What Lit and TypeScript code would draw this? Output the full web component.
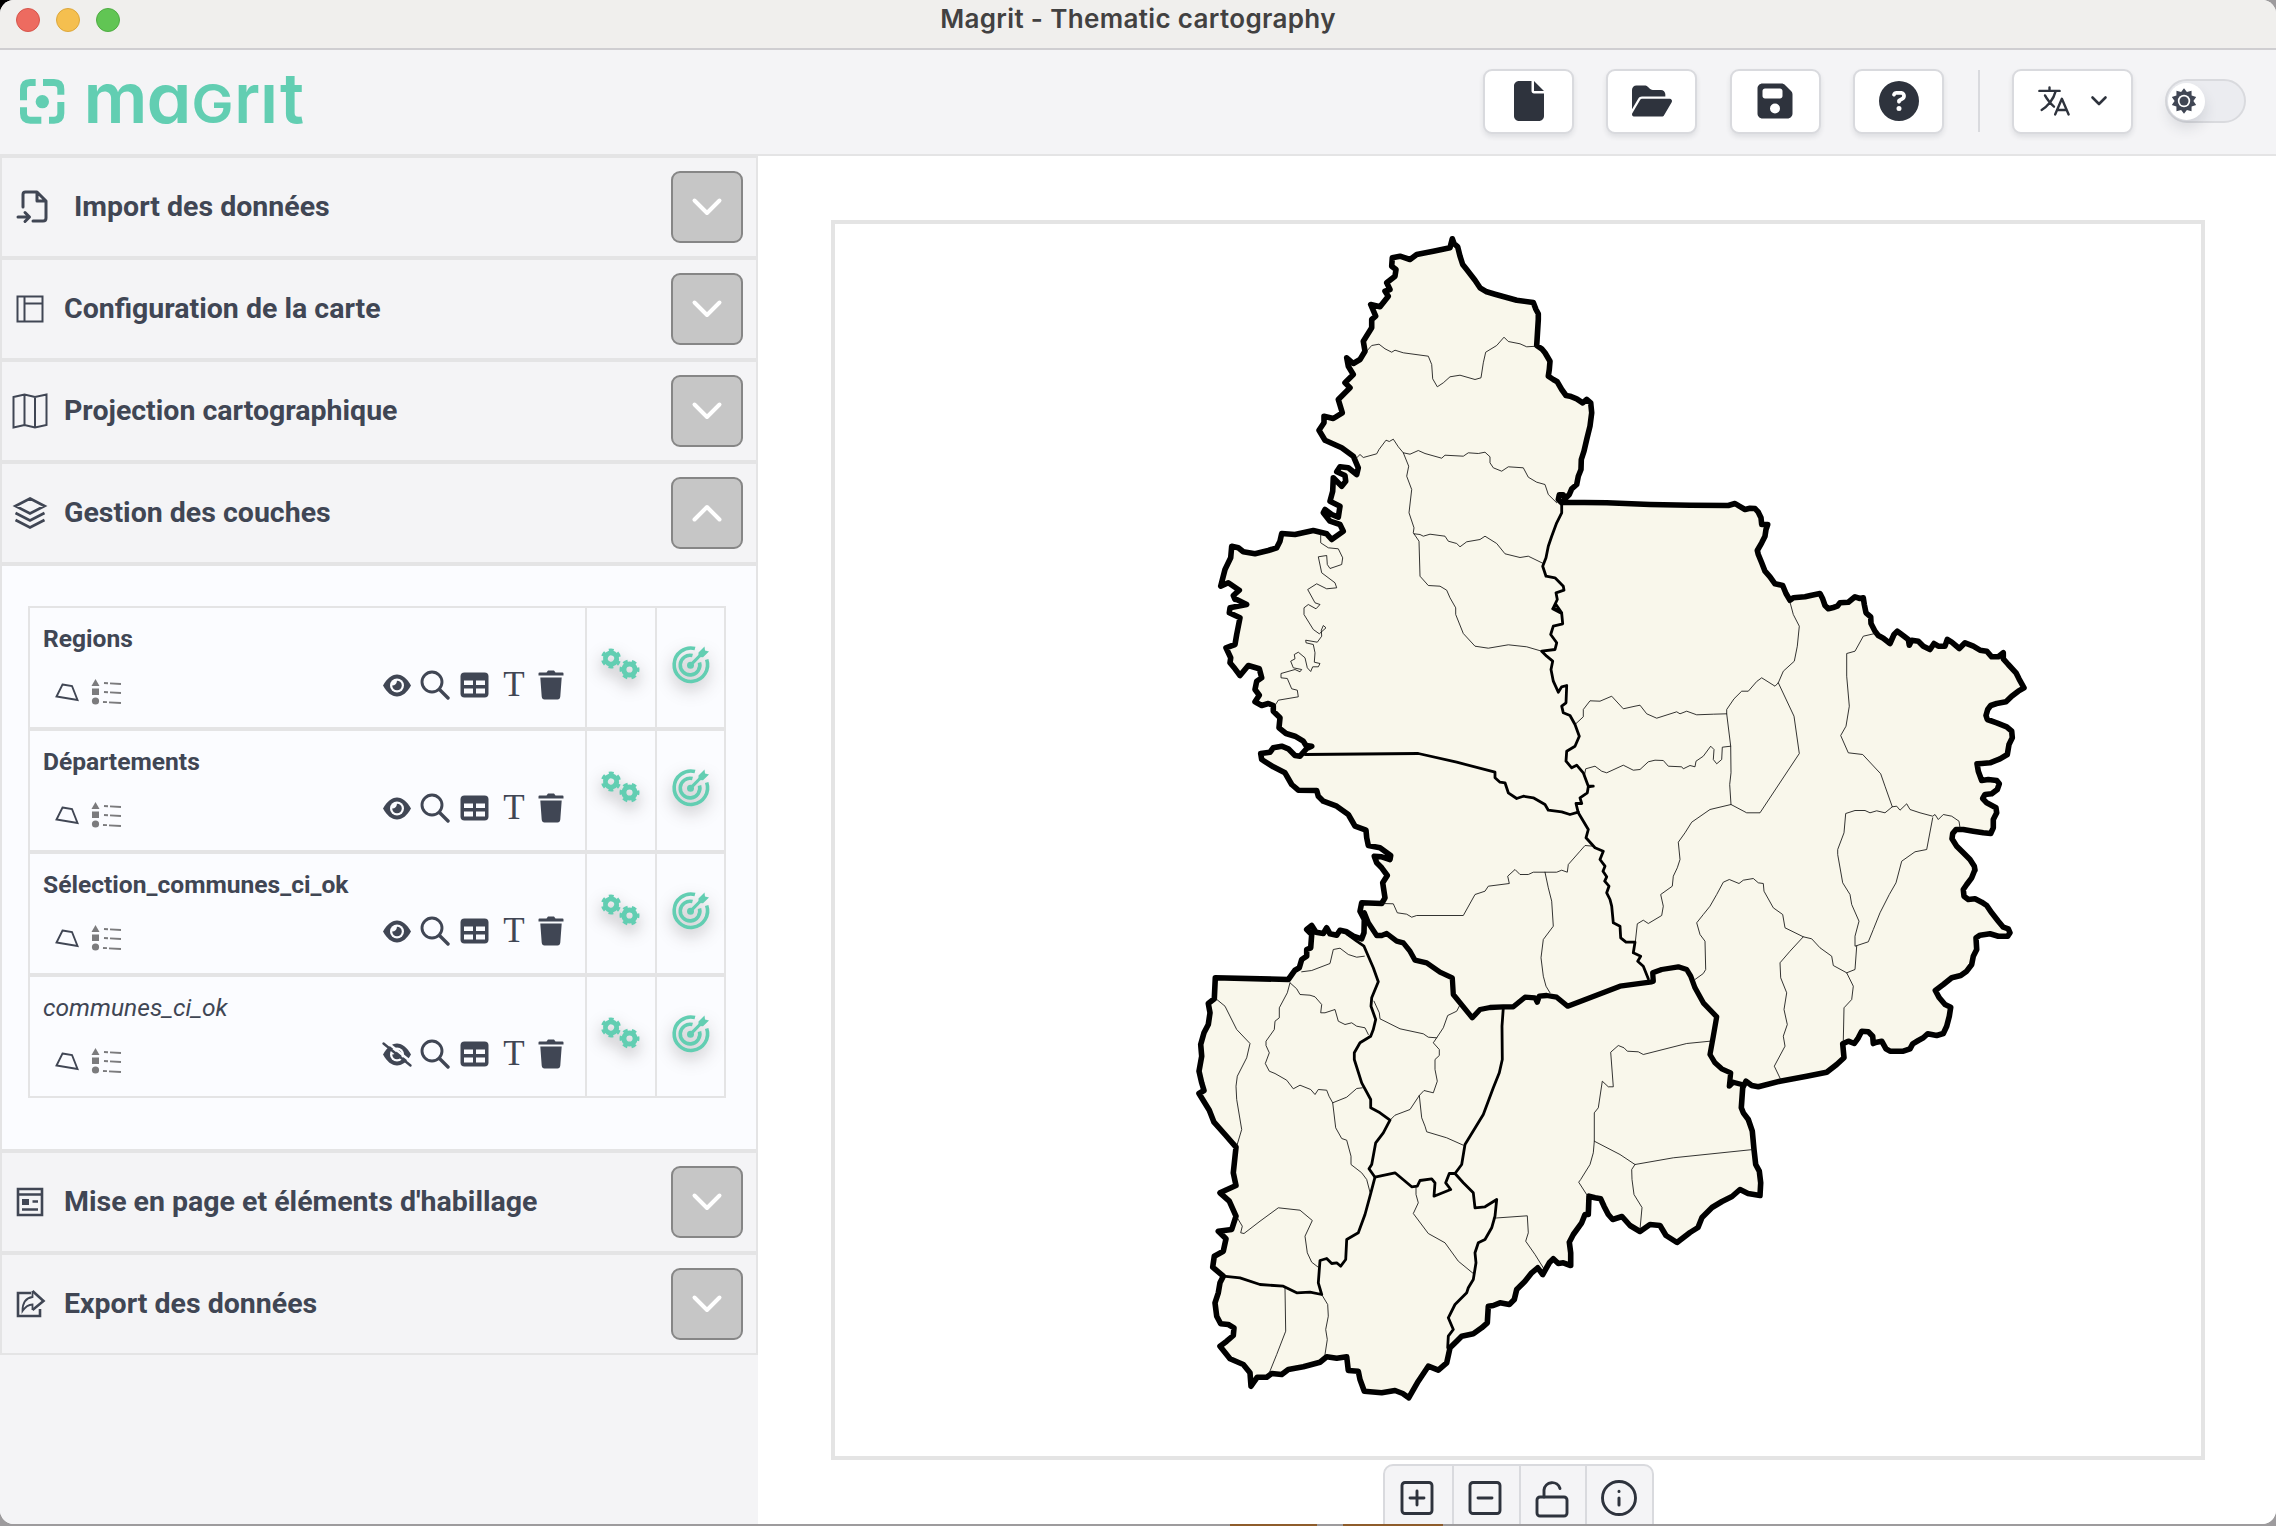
import { LitElement, html, css, svg, TemplateResult, SVGTemplateResult } from "lit";
import { customElement, property } from "lit/decorators.js";

/* ---------- map geometry ---------- */

type Sheet = [number, number];
const A: Sheet = [1180, 220];
const B: Sheet = [1180, 600];
const C: Sheet = [1540, 480];
const D: Sheet = [1540, 780];
const E: Sheet = [1180, 900];

/** Points are stored in thirds of a map unit, relative to the origin of their sheet. */
const pts = (sheet: Sheet, list: string): string =>
  list
    .trim()
    .split(/\s+/)
    .map((p) => {
      const [x, y] = p.split(",").map(Number);
      return `${(sheet[0] + x / 3).toFixed(1)},${(sheet[1] + y / 3).toFixed(1)}`;
    })
    .join(" ");

const OUTLINE = [
  pts(A, `817,58 822,72 833,82 840,110 848,135 860,150 885,182 900,205 920,217 945,224 1010,242 1060,249 1068,270 1075,283 1075,300 1070,378 1085,388 1095,400 1110,425 1108,450 1105,470 1120,480 1132,487 1145,510 1158,528 1170,530 1190,538 1208,550 1220,540 1232,550 1235,580 1230,620 1220,660 1212,695 1204,720 1203,750 1195,770 1190,795 1175,808 1168,825 1155,838 1150,826 1138,826 1135,840 1145,850`),
  pts(C, `65,68 200,70 330,75 450,77 565,78 585,72 598,80 615,90 630,86 645,87 655,98 663,115 665,135 683,135 678,150 675,170 665,190 652,213 655,225 665,250 675,275 690,292 705,313 728,318 738,342 750,362 760,355 795,352 815,347 840,342 848,358 855,378 865,388 880,384 892,380 900,370 925,368 945,352 960,357 970,355 973,375 978,400 992,412 993,432 1005,455 1015,468 1030,476 1050,492 1062,465 1072,455 1085,465 1105,480 1108,497 1115,482 1135,485 1150,500 1170,510 1182,492 1195,500 1215,500 1222,480 1235,488 1258,507 1275,490 1300,500 1320,512 1340,515 1355,532 1375,532 1390,520 1390,538 1405,555 1428,580 1437,598 1452,625 1435,635 1415,650 1398,667 1370,672 1352,678 1343,690 1338,708 1342,720 1370,730 1400,742 1415,755 1417,775 1407,795 1402,825 1380,838 1350,850 1325,852 1311,853 1315,875 1325,903 1345,900 1370,903 1378,913 1372,930 1355,943 1335,945 1328,957 1340,970 1368,985 1370,1000 1360,1020 1360,1045 1352,1062 1330,1060 1300,1055 1270,1050 1248,1050 1238,1062 1236,1078 1250,1100 1270,1120 1290,1140 1303,1160 1305,1172`),
  pts(D, `1303,275 1295,295 1280,315 1270,330 1272,350 1285,360 1305,358 1325,368 1340,378 1355,400 1375,425 1390,443 1405,448 1410,460 1403,470 1375,470 1350,463 1320,467 1308,475 1310,510 1300,530 1295,555 1280,575 1262,588 1235,595 1210,615 1186,633 1198,655 1215,675 1232,683 1228,710 1220,740 1210,762 1190,768 1163,763 1150,775 1135,783 1118,793 1110,808 1090,815 1050,815 1038,808 1025,785 1010,788 1000,792 998,770 985,757 965,755 955,775 943,792 925,785 908,793 912,835 890,855 860,878 800,890 720,905 655,922 635,918 618,905 608,925 606,955 604,985 610,1000 625,1020 637,1055 642,1110 647,1155 658,1175 662,1210`),
  `1760,1196 1748,1194 1740,1190 1732,1197 1722,1202 1712,1208 1702,1218 1698,1228 1690,1233 1677,1243 1666,1236 1660,1226 1650,1225 1640,1232 1630,1226 1622,1217`,
  pts(E, `1298,960 1285,945 1272,920 1262,898 1245,895 1227,890 1225,945 1215,945 1205,970 1180,1005 1168,1028 1172,1060 1172,1098 1150,1090 1135,1092 1120,1078 1108,1090 1088,1125 1073,1105 1055,1120 1035,1145 1010,1170 1003,1200 988,1215 960,1210 940,1218 925,1220 922,1270 905,1285 880,1303 845,1310 830,1325 810,1345 800,1390 775,1412 745,1400 715,1445 686,1495 668,1482 645,1473 605,1480 553,1475 540,1440 535,1415 505,1413 500,1372 470,1376 440,1372 420,1388 370,1402 325,1410 305,1425 275,1422 260,1433 232,1433 213,1460 210,1420 190,1395 150,1378 120,1340 140,1325 160,1308 162,1285 145,1275 122,1273 110,1250 105,1210 115,1180 120,1150 130,1130 98,1103 103,1070 130,1055 138,1018 115,995 155,990 168,950 148,905 120,880 168,858 160,820 168,743 135,705 102,668 88,632 57,582 72,573 65,550 57,515 65,470 62,435 72,400 85,375 90,340 85,312 103,298 106,235 325,240 345,212 358,205 365,180 380,170 380,150 392,145 395,105 380,90 395,78 408,98 430,102 440,85 450,103 470,107 480,92 500,97 520,110 545,118 552,100 553,60 540,35 545,10`),
  pts(B, `605,912 615,895 608,850 622,828 605,805 590,790 583,770 605,772 630,780 632,768 600,745 565,738 560,715 558,692 525,680 505,645 470,620 430,605 415,590 410,573 355,572 335,555 315,520 280,502 245,480 242,462 270,458 280,445 305,440 325,448 345,468 360,470 380,447 395,440 378,438 370,425 345,410 318,402 297,385 300,355 280,335 280,318 265,312 245,318 225,307 238,287 225,270 230,245 245,235 238,208 205,198 180,228 165,208 150,190 152,175 138,145 165,135 170,105 180,55 148,40 150,25 200,15 170,0`),
  pts(A, `165,1140 160,1128 178,1112 145,1090 122,1100 135,1050 152,1015 155,980 175,985 190,997 225,1003 265,993 290,985 300,965 305,942 345,945 400,933 440,943 455,960 490,935 480,915 450,905 430,880 435,870 455,885 475,893 480,860 450,845 458,815 460,775 485,800 497,785 495,768 470,757 480,742 505,745 530,765 535,745 520,710 485,685 435,662 417,632 432,610 432,590 460,597 487,580 475,540 510,505 495,490 520,465 505,440 500,415 520,432 540,420 555,395 550,365 575,325 575,300 587,290 572,255 600,262 625,230 615,215 630,210 620,190 645,170 648,150 635,140 637,115 660,110 690,120 710,105 760,95 810,85`),
].join(" ");

const REGION_BORDER =
  pts(E, `553,40 565,70 590,108 605,108 620,102 650,125 670,130 690,155 705,182 740,190 780,218 817,235 820,285 877,355 900,330 930,324 970,322 1000,322 1035,293 1065,295 1072,308 1078,290 1100,288 1130,293 1163,320`) +
  " " +
  pts(D, `240,620 335,607 340,605 338,580 365,570 415,562 440,570 452,590 465,625 490,670 530,712 520,770 510,825 525,850 545,868 572,880 568,920 580,908 605,915`);

const DEPARTMENTS = [
  pts(A, `1145,850 1145,880 1130,910 1115,950 1105,980 1098,1015 1088,1040 1098,1070 1125,1075 1150,1100 1152,1112 1128,1120 1132,1140 1120,1165 1145,1180`) +
    " " +
    pts(B, `1128,15 1118,28 1145,42 1148,73 1120,80 1112,105 1130,130 1125,150 1085,155 1100,170 1118,185 1113,210 1120,245 1135,278 1145,262 1160,258 1158,310 1145,320 1150,340 1170,348 1185,375 1198,410 1185,440 1160,455 1158,485 1175,505 1190,497 1210,520 1225,560 1240,560 1225,562 1222,580 1200,595 1205,612 1188,612 1195,640 1225,690 1218,715 1245,745 1270,755 1260,780 1275,800 1269,815 1280,832 1274,845 1287,860 1280,880 1290,900 1295,920 1300,970`) +
    " " +
    pts(D, `240,440 242,475 258,488 285,488 280,520 302,530 293,545 310,560 325,598`),
  pts(B, `375,465 715,462 830,488 945,518 945,535 960,548 975,550 985,580 1010,597 1030,590 1060,595 1095,615 1105,632 1145,637 1170,645 1195,638`),
  pts(E, `500,103 530,125 552,140 580,205 595,247 575,295 573,320 587,360 580,390 572,410 540,430 523,460 523,480 545,550 572,600 572,625 600,640 630,662 610,700 587,730 575,795 567,808 585,833 570,890 555,945 535,1000 500,1020 497,1080 482,1100 470,1090 455,1092 440,1077 420,1083 415,1150 425,1185 390,1178 350,1180 310,1160 240,1155 180,1135 130,1130`),
  pts(E, `585,833 645,820 695,862 712,860 720,843 755,838 765,850 762,890 812,870 797,850 808,822 825,822 845,795 855,735 910,645 940,565 958,520 967,480 966,380 970,325`),
  pts(E, `825,822 850,850 880,880 885,925 915,922 950,900 945,950 935,985 915,1020 895,1030 885,1060 888,1090 880,1140 865,1165 860,1180 825,1215 805,1255 820,1290 805,1310 803,1345`),
];

const COMMUNES = [
  pts(A, `560,395 575,378 597,374 615,388 635,398 645,392 670,400 745,410 755,435 758,478 772,502 790,490 810,472 840,467 885,480 903,475 910,430 917,398 950,378 972,353 985,366 1020,373 1040,382 1070,380`),
  pts(A, `525,720 540,705 550,714 590,703 597,690 618,662 628,666 640,659 655,682 670,700 686,740 680,770 695,810 687,880 702,925 700,940 717,965 720,1070 745,1098 780,1100 800,1112 810,1135 827,1165`) +
    " " +
    pts(B, `827,45 850,102 885,140 925,146 985,136 1040,142 1085,155`),
  pts(A, `670,700 690,704 715,693 735,702 785,716 795,707 850,710 865,700 895,702 915,698 930,712 930,730 940,745 965,755 985,742 1030,745 1045,773 1070,788 1095,795 1105,825 1130,850`),
  pts(A, `702,943 720,945 730,950 750,944 795,950 805,965 830,972 840,982 860,967 900,960 915,950 950,972 975,1003 1020,1014 1045,1010 1090,1032`),
  pts(A, `422,945 422,970 445,985 475,988 488,1015 485,1035 450,1047 442,1035 440,1008 415,1012 425,1060 465,1090 470,1105 440,1108 410,1093 383,1110 405,1150 420,1155 408,1168 385,1155 372,1165`) +
    " " +
    pts(B, `372,45 400,90 418,103 438,85 430,78 424,92 425,110 412,128 377,122 378,130 400,135 405,160 403,188 420,192 415,202 398,202 392,216 382,205 375,175 355,158 343,165 345,178 332,185 340,205 365,210 360,217 345,210 303,222 303,235 322,237 335,268 352,272 355,292 295,302 285,318`),
  pts(B, `605,912 640,913 652,940 680,944 695,953 710,948 850,948 885,885 915,875 925,860 988,852 983,830 1005,810 1020,825 1045,825 1060,818 1095,818 1130,818 1145,812 1162,818 1165,795 1200,755 1215,738 1240,740`),
  pts(B, `1095,818 1105,865 1115,905 1120,980 1090,1020 1083,1075 1090,1130 1098,1160 1110,1180`),
  pts(E, `365,217 395,213 450,192 460,150 480,146 505,165 530,173 553,170`),
  pts(E, `330,250 350,268 360,285 390,287 405,292 425,315 422,340 435,340 465,330 475,365 495,375 515,370 530,380 555,385 565,405`),
  pts(E, `330,250 322,280 298,325 298,355 285,365 283,390 258,425 258,438 268,460 256,492 268,515 285,522 320,542 340,568 360,557 392,570 405,585 415,570 440,572 447,590 458,610 467,685 485,717 500,722 513,770 513,795 545,820 560,840 570,878`),
  pts(E, `458,610 500,593 530,567 547,565`),
  pts(E, `108,298 135,320 170,390 210,432 200,475 172,530 168,560 170,600 185,690 170,740`),
  pts(E, `582,305 598,340 600,358 660,388 730,403 745,413 770,415 790,385 803,348 830,335 838,320`),
  pts(E, `770,415 760,430 778,450 778,468 765,480 765,510 772,545 760,580 732,573 718,588 690,630 645,647 630,662`),
  pts(E, `718,588 725,655 735,680 740,697 800,715 850,737`),
  pts(E, `708,862 708,885 715,910 700,942 745,1002 795,1030 835,1085 880,1122`),
  pts(E, `172,955 187,980 182,1000 192,1002 240,965 295,925 360,932 397,963 375,1010 382,1060 395,1088 413,1102`),
  pts(E, `315,1165 317,1295 290,1365 268,1420`),
  pts(E, `425,1185 443,1215 445,1250 437,1290 442,1320 435,1365`),
  pts(E, `940,956 1042,949 1045,1000 1037,1025 1065,1065 1090,1105`),
  pts(C, `750,368 760,405 778,440 772,500 763,545 730,575 715,610 705,620 665,595 650,606 625,635 605,635 582,658 560,690 560,703 572,800 573,880 569,915 573,975`),
  pts(C, `560,703 520,704 470,706 440,695 420,703 410,697 350,716 320,703 300,677 285,680 250,688 215,650 180,665 150,664 130,690 130,712 105,735`),
  pts(C, `572,800 547,803 545,840 530,853 520,840 522,810 512,800 490,830 468,845 465,862 450,858 430,868 425,862 385,860 370,843 345,842 325,847 300,870 280,872 250,857 200,880 185,875 165,860 137,868 133,890`),
  pts(C, `715,610 762,710 778,822 660,1000 620,1000 573,975 510,990 455,1028 435,1060 415,1088 420,1140 412,1165 400,1190`) +
    " " +
    pts(D, `397,320 362,345 370,380 365,408 325,432 310,422 292,433 286,488`),
  pts(D, `465,600 490,582 497,570 495,485 480,465 470,430 490,405 510,380 530,345 550,308 568,300 597,312 610,302 640,297 655,310 670,312 672,335 700,385 728,405 735,445 790,472 815,478 840,505 875,530 880,558 920,580 940,620 935,660 912,685 910,785`),
  pts(D, `790,472 750,515 720,550 722,595 740,640 732,690 742,735 730,770 735,800 703,860 722,900`),
  pts(C, `1005,462 970,470 945,515 920,522 920,590 928,680 918,740 902,768 925,820 968,825 1022,883 1035,920 1057,982 1035,1000 1010,994 990,1000 975,993 945,993 917,1002 912,1060 893,1110`) +
    " " +
    pts(D, `893,225 908,310 930,345 935,375 957,425 945,470 945,500 985,487 1000,450 1020,400 1048,345 1068,310 1085,245 1125,217 1160,210 1178,115`),
  pts(D, `950,500 945,570 920,580`),
  pts(C, `1057,982 1070,980 1080,992 1100,973 1110,990 1140,1000 1178,1010 1185,1005 1195,1020 1210,1005 1235,1010 1257,1025 1260,1045`),
  pts(D, `510,785 440,792 310,825 295,817 262,815 252,805 235,798 212,818 220,922 205,922 187,905 175,985 163,1000 163,1085 240,1125 285,1155 400,1135 640,1110`),
  pts(D, `285,1155 275,1170 276,1200`) + " 1634,1195 1642,1208 1640,1230",
  pts(D, `163,1085 160,1120 150,1155 122,1200`) + " " + pts(E, `1196,848 1222,888`),
];

/* ---------- icons ---------- */

const starPoints = (n: number, outer: number, inner: number): string =>
  Array.from({ length: n * 2 }, (_, i) => {
    const r = i % 2 ? inner : outer;
    const a = (Math.PI * i) / n - Math.PI / 2;
    return `${(r * Math.cos(a)).toFixed(2)},${(r * Math.sin(a)).toFixed(2)}`;
  }).join(" ");

const icon = (name: string, w: number, h: number, box: string, body: SVGTemplateResult) =>
  html`<svg class=${name} width=${w} height=${h} viewBox=${box} aria-hidden="true">${body}</svg>`;

const iFile = icon("solid", 40, 40, "0 0 384 512", svg`<path d="M0 64C0 28.7 28.7 0 64 0H224V128c0 17.7 14.3 32 32 32H384V448c0 35.3-28.7 64-64 64H64c-35.3 0-64-28.7-64-64V64zm384 64H256V0L384 128z"/>`);
const iFolder = icon("solid", 40, 40, "0 0 576 512", svg`<path d="M88.7 223.8L0 375.8V96C0 60.7 28.7 32 64 32H181.5c17 0 33.3 6.7 45.3 18.7l26.5 26.5c12 12 28.3 18.7 45.3 18.7H416c35.3 0 64 28.7 64 64v32H144c-22.8 0-43.8 12.1-55.3 31.8zm27.6 16.1C122.1 230 132.6 224 144 224H544c11.5 0 22 6.1 27.7 16.1s5.7 22.2-.1 32.1l-112 192C453.9 474 443.4 480 432 480H32c-11.5 0-22-6.1-27.7-16.1s-5.7-22.2 .1-32.1l112-192z"/>`);
const iSave = icon("solid", 40, 40, "0 0 448 512", svg`<path d="M64 32C28.7 32 0 60.7 0 96V416c0 35.3 28.7 64 64 64H384c35.3 0 64-28.7 64-64V173.3c0-17-6.7-33.3-18.7-45.3L352 50.7C340 38.7 323.7 32 306.7 32H64zm0 96c0-17.7 14.3-32 32-32H288c17.7 0 32 14.3 32 32v64c0 17.7-14.3 32-32 32H96c-17.7 0-32-14.3-32-32V128zM224 288a64 64 0 1 1 0 128 64 64 0 1 1 0-128z"/>`);
const iHelp = icon("solid", 40, 40, "0 0 512 512", svg`<path d="M256 512A256 256 0 1 0 256 0a256 256 0 1 0 0 512zM169.8 165.3c7.9-22.3 29.1-37.3 52.8-37.3h58.3c34.9 0 63.1 28.3 63.1 63.1c0 22.6-12.1 43.5-31.7 54.8L280 264.4c-.2 13-10.9 23.6-24 23.6c-13.3 0-24-10.7-24-24V250.5c0-8.6 4.6-16.5 12.1-20.8l44.3-25.4c4.7-2.7 7.6-7.7 7.6-13.1c0-8.4-6.8-15.1-15.1-15.1H222.6c-3.4 0-6.4 2.1-7.5 5.3l-.4 1.2c-4.4 12.5-18.2 19-30.6 14.6s-19-18.2-14.6-30.6l.4-1.2zM224 352a32 32 0 1 1 64 0 32 32 0 1 1 -64 0z"/>`);
const iLang = icon("line", 36, 36, "0 0 512 512", svg`<path stroke-width="34" d="M48 112h288M192 64v48M272 448l96-224 96 224M301.5 384h133M281.3 112S257 206 199 277 80 384 80 384M256 336s-35-27-72-75-56-85-56-85"/>`);
const iCaret = icon("line", 18, 12, "0 0 18 12", svg`<path stroke-width="2.6" d="M2.5 2.5L9 9l6.5-6.5"/>`);
const iSun = icon("sun", 26, 26, "-13 -13 26 26", svg`<polygon points=${starPoints(10, 12.8, 9.4)}/><circle r="6.2"/><circle class="core" r="4.5"/>`);

const iImport = icon("line", 34, 36, "0 0 34 36", svg`<path stroke-width="3" d="M7 18V5.500Q7 3 9.500 3H21L30 12V29Q30 32 27 32H17M21 3.500V12H29.500M2 28H13M9 23.500L13.500 28L9 32.500"/>`);
const iConfig = icon("line thin", 28, 28, "0 0 28 28", svg`<path stroke-width="2" d="M1.500 1.500H26.500V26.500H1.500ZM8.500 1.500V26.500M8.500 8.500H26.500"/>`);
const iMap = icon("line thin", 36, 36, "0 0 36 36", svg`<path stroke-width="2" d="M1.500 4L12.500 1.500L23 4L34.500 1.500V32L23 34.500L12.500 32L1.500 34.500ZM12.500 1.500V32M23 4V34.500"/>`);
const iLayers = icon("line thin", 34, 34, "0 0 34 34", svg`<path stroke-width="2.700" d="M17 2.500L31.500 10L17 17.500L2.500 10ZM2.500 17L17 24.500L31.500 17M2.500 24L17 31.500L31.500 24"/>`);
const iLayout = icon("line thin", 28, 30, "0 0 28 30", svg`<path stroke-width="2.600" d="M2 2H26V28H2ZM2 7.500H26M16.500 14.500H22M6 22.500H22"/><rect class="fill" x="6" y="12" width="7" height="6"/>`);
const iExport = icon("line thin", 30, 30, "0 0 30 30", svg`<path stroke-width="2.600" d="M16 4H3V27H25V20M17.500 2L28.500 12L17.500 21"/><path stroke-width="1.800" d="M17.500 2V8C10 9 7.500 15 7.500 22C10.500 17.500 13 15.500 17.500 15.500V21"/>`);

const iPoly = icon("line thin", 24, 20, "0 0 24 20", svg`<path stroke-width="1.900" d="M7.500 2.500L17 4L22.500 18L1.500 14.500Z"/>`);
const iLegend = icon("legend", 31, 28, "0 0 31 28", svg`<path d="M4.500 1L8.500 8H.500Z"/><rect x="1" y="10.500" width="7" height="6.500"/><circle cx="4.500" cy="23" r="3.600"/><path class="dash" d="M13 5L30 6M13 14L30 15M12 24L30 25"/>`);
const lens = svg`<path d="M1 12.500C5 5.500 9.500 1.500 15 1.500S25 5.500 29 12.500C25 19.500 20.500 23.500 15 23.500S5 19.500 1 12.500Z"/><circle class="paper" cx="15" cy="12.500" r="7"/><path d="M15 7.700A4.800 4.800 0 1 1 10.200 12.500Q14.500 12.500 15 7.700Z"/>`;
const iEye = icon("dark", 30, 25, "0 0 30 25", lens);
const iEyeOff = icon("dark", 30, 25, "0 0 30 25", svg`${lens}<path class="paper-line" d="M3.500 -1L30.500 21"/><path class="bar" d="M1.500 1.500L28.500 23.500"/>`);
const iSearch = icon("line thin", 30, 30, "0 0 30 30", svg`<circle stroke-width="2.900" cx="12" cy="12" r="10"/><path stroke-width="3.400" stroke-linecap="round" d="M19.500 19.500L28 28"/>`);
const iTable = icon("dark", 29, 26, "0 0 29 26", svg`<rect x=".5" y=".5" width="28" height="25" rx="4"/><path class="paper" d="M4 8.500H13V13H4ZM16 8.500H25V13H16ZM4 16.500H13V21.500H4ZM16 16.500H25V21.500H16Z"/>`);
const iTrash = icon("dark", 26, 30, "0 0 26 30", svg`<path d="M1.500 2.500H8.500L10 .500H16L17.500 2.500H24.500Q25.500 2.500 25.500 3.500V5.500H.500V3.500Q.500 2.500 1.500 2.500ZM2.300 7.500H23.700L22.300 26.500Q22 29.500 19.500 29.500H6.500Q4 29.500 3.700 26.500Z"/>`);

const gear = (x: number, y: number, turn: number) => svg`<g transform="translate(${x} ${y}) rotate(${turn})">
  <circle r="5.600" stroke-width="5"/><circle r="8.200" stroke-width="3.600" stroke-dasharray="4.500 4.087" stroke-dashoffset="2.250"/></g>`;
const iGears = icon("mint", 42, 36, "0 0 42 36", svg`${gear(11, 12.5, 30)}${gear(29.5, 23.5, 0)}`);
const iTarget = icon("mint", 42, 40, "0 0 42 40", svg`<path stroke-width="3.600" d="M25 4.600A16.700 16.700 0 1 0 36.700 15.500M22.500 11.600A9.800 9.800 0 1 0 29.500 18.500"/><circle class="dot" cx="20.500" cy="21.200" r="3.500"/><path stroke-width="3.200" d="M20.500 21.200L32 9.500"/><path class="dot" d="M28.500 8.500L34.500 2.500L35 6.500L39 7.500L33 13.200L28.500 13Z"/>`);

const iPlus = icon("line", 36, 36, "0 0 36 36", svg`<rect stroke-width="2.900" x="3" y="2.500" width="30" height="31" rx="3"/><path stroke-width="2.900" d="M18 11V25M11 18H25"/>`);
const iMinus = icon("line", 36, 36, "0 0 36 36", svg`<rect stroke-width="2.900" x="3" y="2.500" width="30" height="31" rx="3"/><path stroke-width="2.900" d="M11 18H25"/>`);
const iLock = icon("line", 36, 40, "0 0 36 40", svg`<rect stroke-width="2.900" x="3" y="18" width="30" height="19" rx="3"/><path stroke-width="2.900" d="M10 18V11A8.200 8.200 0 0 1 26 9.500"/>`);
const iInfo = icon("line", 38, 38, "0 0 38 38", svg`<circle stroke-width="2.900" cx="19" cy="19" r="16.500"/><path stroke-width="3" d="M19 19V26M19 12.200V12.500"/>`);

/* ---------- sidebar section header ---------- */

@customElement("menu-section")
export class MenuSection extends LitElement {
  @property() label = "";
  @property({ type: Boolean }) open = false;
  @property({ type: Boolean }) indented = false;
  @property({ attribute: false }) glyph?: TemplateResult;

  static styles = css`
    :host { display: block; }
    .head {
      box-sizing: border-box; height: 102px; border: 2px solid #e4e4e5;
      display: flex; align-items: center; padding: 0 13px 0 9px; background: #f4f4f6;
    }
    .glyph { width: 38px; display: flex; justify-content: center; }
    .label { flex: 1; margin-left: 15px; font: 700 28.5px/36px Roboto, sans-serif; color: #404654; white-space: nowrap; }
    .indented .glyph { width: 44px; }
    .indented .label { margin-left: 19px; }
    svg { fill: none; stroke: #404654; overflow: visible; }
    .line { stroke-linecap: round; stroke-linejoin: round; }
    .thin { stroke-linecap: butt; stroke-linejoin: miter; }
    .fill { fill: #404654; stroke: none; }
    .toggle {
      box-sizing: border-box; width: 72px; height: 72px; border: 2px solid #868686; border-radius: 9px;
      background: #c6c6c6; display: flex; align-items: center; justify-content: center; padding: 0;
    }
    .chev { stroke: #fff; stroke-width: 4; stroke-linecap: round; stroke-linejoin: round; }
    .open .chev { transform: rotate(180deg); }
  `;

  render() {
    return html`<div class="head ${this.indented ? "indented" : ""} ${this.open ? "open" : ""}">
      <span class="glyph">${this.glyph}</span>
      <span class="label">${this.label}</span>
      <button class="toggle" aria-label=${this.label}>
        <svg class="chev" width="30" height="18" viewBox="0 0 30 18"><path d="M2.500 2.500L15 15L27.500 2.500" /></svg>
      </button>
    </div>`;
  }
}

/* ---------- one layer of the layer manager ---------- */

@customElement("layer-row")
export class LayerRow extends LitElement {
  @property() name = "";
  @property({ type: Boolean }) off = false;

  static styles = css`
    :host { display: block; }
    .row { box-sizing: border-box; height: 123px; border: 2px solid #e4e4e5; display: grid; grid-template-columns: 1fr 70px 69px; }
    .info { padding: 17px 21px 0 13px; display: flex; flex-direction: column; }
    .name { font: 700 24.6px/28px Roboto, sans-serif; color: #404654; }
    .name.off { font-weight: 400; font-style: italic; }
    .tools { display: flex; align-items: flex-start; margin-top: 17px; }
    .kind { display: flex; align-items: center; gap: 12px; padding: 8px 0 0 12px; flex: 1; }
    .actions { display: flex; align-items: center; height: 30px; }
    .actions > * { flex: none; }
    .eye { width: 30px; display: flex; margin-right: 8px; }
    .type { width: 30px; margin-left: 10px; text-align: center; font: 35px/30px "Liberation Serif", serif; color: #404654; }
    .tab { display: flex; margin: 0 0 0 10px; width: 29px; }
    .bin { display: flex; margin-left: 9px; }
    .side { border-left: 2px solid #e4e4e5; display: flex; align-items: center; justify-content: center; padding-bottom: 8px; }
    svg { fill: none; stroke: #404654; }
    .dark { fill: #404654; stroke: none; overflow: visible; }
    .paper { fill: #fbfcff; }
    .paper-line { stroke: #fbfcff; stroke-width: 2.4; }
    .bar { stroke: #404654; stroke-width: 2.4; stroke-linecap: round; }
    .legend { fill: #7b7b7d; stroke: none; }
    .dash { stroke: #7b7b7d; stroke-width: 1.8; stroke-dasharray: 4 2 12 0; }
    .mint { stroke: #62ceb2; filter: drop-shadow(0 7px 8px rgba(30, 20, 20, 0.3)); overflow: visible; stroke-linecap: butt; }
    .mint .dot { fill: #62ceb2; stroke: none; }
  `;

  render() {
    return html`<div class="row">
      <div class="info">
        <div class="name ${this.off ? "off" : ""}">${this.name}</div>
        <div class="tools">
          <div class="kind">${iPoly}${iLegend}</div>
          <div class="actions">
            <span class="eye">${this.off ? iEyeOff : iEye}</span>${iSearch}<span class="tab">${iTable}</span>
            <span class="type">T</span><span class="bin">${iTrash}</span>
          </div>
        </div>
      </div>
      <div class="side">${iGears}</div>
      <div class="side">${iTarget}</div>
    </div>`;
  }
}

/* ---------- application window ---------- */

@customElement("app-root")
export class AppRoot extends LitElement {
  static styles = css`
    :host { display: block; width: 2276px; height: 1526px; overflow: hidden; background: #9d9b9d; font-family: Roboto, sans-serif; }
    .desk { height: 1526px; background: linear-gradient(90deg, #000 0 60px, #9d9b9d 60px) 0 0 / 100% 60px no-repeat; }
    .window { height: 1524px; border-radius: 14px; overflow: hidden; background: #fff; display: flex; flex-direction: column; }
    .titlebar {
      box-sizing: border-box; height: 50px; flex: none; background: #f0efed; border-bottom: 2px solid #cfced1;
      display: grid; grid-template-columns: 1fr auto 1fr; padding-left: 16px;
    }
    .lights { display: flex; gap: 16px; padding-top: 8px; }
    .light { box-sizing: border-box; width: 24px; height: 24px; border-radius: 50%; border: 1px solid; }
    .red { background: #ed6b60; border-color: #d5554b; }
    .amber { background: #f5bf4f; border-color: #dca73c; }
    .green { background: #61c554; border-color: #4fac43; }
    .title { font: 600 26px/38px Inter, sans-serif; color: #424141; letter-spacing: 0.35px; padding-right: 16px; }
    .header {
      box-sizing: border-box; height: 106px; flex: none; background: #f4f4f6; border-bottom: 2px solid #e4e4e5;
      display: flex; align-items: center; padding: 0 30px 2px 0;
    }
    .logo { flex: none; margin-right: auto; overflow: visible; }
    .mark { fill: none; stroke: #62ceb2; stroke-width: 21; }
    .pupil { fill: #62ceb2; stroke: none; }
    .word text { font: 600 69px Inter, sans-serif; font-feature-settings: "cv11"; fill: #62ceb2; }
    .word .cap { font-size: 53px; }
    .btn {
      box-sizing: border-box; width: 91px; height: 65px; margin-right: 32.4px; background: #fff; border: 2px solid #d9dade;
      border-radius: 9px; box-shadow: 0 3px 5px rgba(40, 45, 60, 0.1); display: flex; align-items: center; justify-content: center; padding: 0;
    }
    .lang { width: 121px; gap: 18px; }
    .rule { width: 2px; height: 62px; background: #d9dade; margin: 0 32px 0 1px; }
    .switch {
      box-sizing: border-box; width: 81px; height: 44px; border-radius: 22px; border: 2px solid #d9dade; background: #ebecf0;
      display: flex; align-items: center; padding-left: 1px;
    }
    .knob { width: 37px; height: 37px; border-radius: 50%; background: #fff; display: flex; align-items: center; padding-left: 3px; box-sizing: border-box; box-shadow: 0 8px 14px rgba(40, 45, 60, 0.13); }
    .solid { fill: #2e333d; }
    .line { fill: none; stroke: #2e333d; stroke-linecap: round; stroke-linejoin: round; }
    .sun { fill: #404654; }
    .sun circle { fill: #fff; }
    .sun .core { fill: #404654; }
    .body { flex: 1; display: grid; grid-template-columns: 758px 1fr; min-height: 0; }
    .sidebar { background: #f4f4f6; margin-top: -2px; }
    .layers { box-sizing: border-box; height: 587px; border: 2px solid #e4e4e5; background: #fbfcff; padding: 40px 30px 0 26px; }
    .main { background: #fff; padding: 64px 0 0 74px; display: flex; flex-direction: column; min-height: 0; }
    .sidebar { padding-top: 2px; margin-top: 0; box-sizing: border-box; padding-top: 0; }
    .main { padding-left: 73px; }
    .frame { box-sizing: border-box; width: 1374px; height: 1240px; border: 4px solid #e4e4e4; flex: none; }
    .map { display: block; fill: none; stroke: #000; stroke-linejoin: round; stroke-linecap: round; }
    .land { fill: #f9f7eb; stroke-width: 5.6; }
    .region { stroke-width: 5.3; }
    .dept { stroke-width: 2.8; }
    .commune { stroke-width: 0.85; stroke: #111; }
    .zoombar {
      box-sizing: border-box; width: 271px; height: 76px; flex: none; margin: 4px 0 0 552px; border: 2px solid #d9dade; border-radius: 10px;
      background: #f4f4f6; display: grid; grid-template-columns: repeat(4, 1fr);
    }
    .zoombar span { display: flex; align-items: flex-start; justify-content: center; padding: 14px 2px 0 0; border-left: 2px solid #d9dade; }
    .zoombar span:first-child { border-left: none; }
    .zoombar .tall { padding-top: 13px; }
    .dock { height: 2px; display: flex; gap: 26px; padding-left: 1230px; }
    .tile { width: 87px; background: #8e5c2b; }
    .tile.wide { width: 100px; }
  `;

  private layers = ["Regions", "Départements", "Sélection_communes_ci_ok", "communes_ci_ok"];

  render() {
    return html`<div class="desk">
      <div class="window">
        <div class="titlebar">
          <div class="lights"><i class="light red"></i><i class="light amber"></i><i class="light green"></i></div>
          <div class="title">Magrit - Thematic cartography</div>
        </div>
        <header class="header">
          <svg class="logo" width="320" height="102" viewBox="0 50 320 102">
            <g class="mark" transform="translate(0 60) scale(.3333)">
              <path d="M70.500 121V88Q70.500 67.500 91 67.500H107M129 67.500H162Q182.500 67.500 182.500 88V104M182.500 126V160Q182.500 180.500 162 180.500H147M124 180.500H91Q70.500 180.500 70.500 160V142" />
              <circle class="pupil" cx="127" cy="125" r="20" />
            </g>
            <g class="word">
              <text x="83.500" y="122.500" textLength="64" lengthAdjust="spacingAndGlyphs">m</text>
              <text x="146.500" y="122.500" textLength="45" lengthAdjust="spacingAndGlyphs">a</text>
              <text class="cap" x="191.500" y="122.500" textLength="42" lengthAdjust="spacingAndGlyphs">G</text>
              <text x="234.500" y="122.500" textLength="25" lengthAdjust="spacingAndGlyphs">r</text>
              <text x="260" y="122.500">ı</text>
              <text x="280" y="122.500" textLength="24" lengthAdjust="spacingAndGlyphs">t</text>
            </g>
          </svg>
          <button class="btn">${iFile}</button>
          <button class="btn">${iFolder}</button>
          <button class="btn">${iSave}</button>
          <button class="btn">${iHelp}</button>
          <div class="rule"></div>
          <button class="btn lang">${iLang}${iCaret}</button>
          <div class="switch"><div class="knob">${iSun}</div></div>
        </header>
        <div class="body">
          <nav class="sidebar">
            <menu-section label="Import des données" indented .glyph=${iImport}></menu-section>
            <menu-section label="Configuration de la carte" .glyph=${iConfig}></menu-section>
            <menu-section label="Projection cartographique" .glyph=${iMap}></menu-section>
            <menu-section label="Gestion des couches" open .glyph=${iLayers}></menu-section>
            <div class="layers">
              ${this.layers.map((n, i) => html`<layer-row .name=${n} ?off=${i === 3}></layer-row>`)}
            </div>
            <menu-section label="Mise en page et éléments d'habillage" .glyph=${iLayout}></menu-section>
            <menu-section label="Export des données" .glyph=${iExport}></menu-section>
          </nav>
          <main class="main">
            <div class="frame">
              <svg class="map" width="1366" height="1232" viewBox="835 224.500 1366 1232">
                <polygon class="land" points=${OUTLINE} />
                ${COMMUNES.map((p) => svg`<polyline class="commune" points=${p} />`)}
                ${DEPARTMENTS.map((p) => svg`<polyline class="dept" points=${p} />`)}
                <polyline class="region" points=${REGION_BORDER} />
              </svg>
            </div>
            <div class="zoombar">
              <span>${iPlus}</span><span>${iMinus}</span><span class="tall">${iLock}</span><span class="tall">${iInfo}</span>
            </div>
          </main>
        </div>
      </div>
      <div class="dock"><div class="tile"></div><div class="tile wide"></div></div>
    </div>`;
  }
}
